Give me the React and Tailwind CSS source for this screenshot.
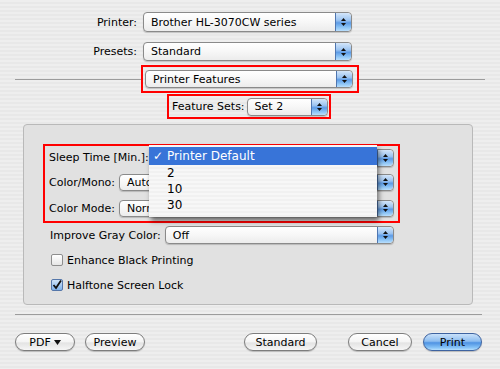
import React from "react";

function Stepper() {
  return (
    <div className="w-[16px] shrink-0 rounded-r-[4px] border-l border-[#4f76b0] bg-[linear-gradient(180deg,#d4e6fa_0%,#9cc4f1_40%,#5d9be6_55%,#8cc4f6_80%,#b9defc_100%)] flex flex-col items-center justify-center gap-[2px]">
      <svg width="5" height="3" viewBox="0 0 5 3"><path d="M2.5 0L5 3H0Z" fill="#111" /></svg>
      <svg width="5" height="3" viewBox="0 0 5 3"><path d="M0 0H5L2.5 3Z" fill="#111" /></svg>
    </div>
  );
}

function Select({ text, className }) {
  return (
    <div className={"flex items-stretch rounded-[4px] border border-[#8a8a8a] bg-[linear-gradient(180deg,#ffffff_0%,#f7f7f7_50%,#ececec_100%)] shadow-[0_1px_1px_rgba(0,0,0,0.18)] overflow-hidden " + className}>
      <span className="flex-1 pl-[7px] flex items-center whitespace-nowrap overflow-hidden">{text}</span>
      <Stepper />
    </div>
  );
}

function Checkbox({ checked }) {
  if (checked) {
    return (
      <div className="w-[12px] h-[12px] shrink-0 rounded-[2px] border border-[#5577aa] bg-[linear-gradient(180deg,#cfe3f8,#7fb2ec)] flex items-center justify-center">
        <svg width="10" height="10" viewBox="0 0 10 10"><path d="M1.5 5L4 8L9 0.5" stroke="#111" strokeWidth="1.8" fill="none" /></svg>
      </div>
    );
  }
  return <div className="w-[12px] h-[12px] shrink-0 rounded-[2px] border border-[#8e8e8e] bg-[linear-gradient(180deg,#ffffff,#e6e6e6)]" />;
}

function Button({ children, className, blue }) {
  return (
    <div
      className={
        "h-[18px] shrink-0 rounded-full border flex items-center justify-center shadow-[0_1px_1px_rgba(0,0,0,0.2)] " +
        (blue
          ? "border-[#3e63a0] bg-[linear-gradient(180deg,#c9e1fa_0%,#8dbdf0_45%,#4f93e3_55%,#86c3f7_85%,#b8e0fd_100%)] "
          : "border-[#7d7d7d] bg-[linear-gradient(180deg,#ffffff_0%,#f4f4f4_50%,#e3e3e3_55%,#f6f6f6_100%)] ") +
        className
      }
    >
      {children}
    </div>
  );
}

export default function App() {
  return (
    <div className="w-[500px] h-[369px] overflow-hidden flex flex-col text-[11px] leading-none text-black whitespace-nowrap font-['DejaVu_Sans',sans-serif] bg-[repeating-linear-gradient(180deg,#eeeeee_0px,#eeeeee_2px,#e8e8e8_2px,#e8e8e8_4px)]">
      {/* top rows */}
      <div className="pt-[12px] flex flex-col gap-[10px]">
        <div className="flex items-center">
          <div className="w-[138px] shrink-0 text-right pr-[1px]">Printer:</div>
          <Select text="Brother HL-3070CW series" className="ml-[5px] w-[209px] h-[20px]" />
        </div>
        <div className="flex items-center">
          <div className="w-[138px] shrink-0 text-right pr-[1px]">Presets:</div>
          <Select text="Standard" className="ml-[5px] w-[209px] h-[19px]" />
        </div>
      </div>

      {/* separator with Printer Features */}
      <div className="mt-[4px] flex items-center px-[15px] h-[28px]">
        <div className="flex-1 h-px bg-[#9c9c9c]" />
        <div className="w-[218px] h-[28px] shrink-0 border-2 border-[#ff0000] flex items-center pl-[2px]">
          <Select text="Printer Features" className="w-[208px] h-[18px]" />
        </div>
        <div className="flex-1 h-px bg-[#9c9c9c]" />
      </div>

      {/* Feature sets */}
      <div className="mt-[1px] pl-[167px]">
        <div className="w-[164px] h-[25px] border-2 border-[#ff0000] flex items-center pl-[3px]">
          <span className="shrink-0">Feature Sets:</span>
          <Select text="Set 2" className="ml-[2px] w-[81px] h-[18px] shrink-0" />
        </div>
      </div>

      {/* panel */}
      <div className="mt-[5px] ml-[23px] w-[450px] h-[181px] relative rounded-[4px] border border-[#b9b9b9] bg-[#e1e1e1] pl-[19px] pt-[19px]">
        <div className="w-[357px] border-2 border-[#ff0000] pl-[4px] flex flex-col">
          <div className="h-[23px] flex items-center">
            <span className="shrink-0">Sleep Time [Min.]:</span>
            <Select text="" className="ml-[4px] flex-1 mr-[4px] h-[18px]" />
          </div>
          <div className="h-[26px] flex items-center">
            <span className="shrink-0">Color/Mono:</span>
            <Select text="Auto" className="ml-[4px] flex-1 mr-[4px] h-[17px]" />
          </div>
          <div className="h-[26px] flex items-center">
            <span className="shrink-0">Color Mode:</span>
            <Select text="Normal" className="ml-[4px] flex-1 mr-[4px] h-[17px]" />
          </div>
        </div>
        <div className="w-[357px] pl-[7px] flex flex-col">
          <div className="h-[24px] flex items-center">
            <span className="shrink-0">Improve Gray Color:</span>
            <Select text="Off" className="ml-[4px] flex-1 mr-[6px] h-[18px]" />
          </div>
          <div className="h-[26px] flex items-center gap-[4px] pl-[1px]">
            <Checkbox />
            <span>Enhance Black Printing</span>
          </div>
          <div className="h-[24px] flex items-center gap-[4px] pl-[1px]">
            <Checkbox checked />
            <span>Halftone Screen Lock</span>
          </div>
        </div>

        {/* open menu */}
        <div className="absolute left-[125px] top-[20px] w-[228px] h-[72px] pt-[2px] bg-[repeating-linear-gradient(180deg,#f7f7f7_0px,#f7f7f7_2px,#f1f1f1_2px,#f1f1f1_4px)] shadow-[2px_4px_5px_rgba(0,0,0,0.5)] text-[12px]">
          <div className="h-[18px] bg-[#3874d8] text-white flex items-center">
            <span className="w-[18px] text-center">✓</span>
            <span>Printer Default</span>
          </div>
          <div className="h-[16px] flex items-center pl-[18px]">2</div>
          <div className="h-[16px] flex items-center pl-[18px]">10</div>
          <div className="h-[16px] flex items-center pl-[18px]">30</div>
        </div>
      </div>

      {/* bottom separator */}
      <div className="mt-[9px] mx-[15px] w-[467px] h-px bg-[#9c9c9c]" />

      {/* buttons */}
      <div className="mt-[18px] flex items-center">
        <Button className="ml-[15px] w-[60px] gap-[3px]">
          <span>PDF</span>
          <svg width="7" height="5" viewBox="0 0 7 5"><path d="M0 0H7L3.5 5Z" fill="#111" /></svg>
        </Button>
        <Button className="ml-[10px] w-[60px]">Preview</Button>
        <Button className="ml-[99px] w-[73px]">Standard</Button>
        <Button className="ml-[31px] w-[64px]">Cancel</Button>
        <Button blue className="ml-[11px] w-[59px]">Print</Button>
      </div>
    </div>
  );
}
